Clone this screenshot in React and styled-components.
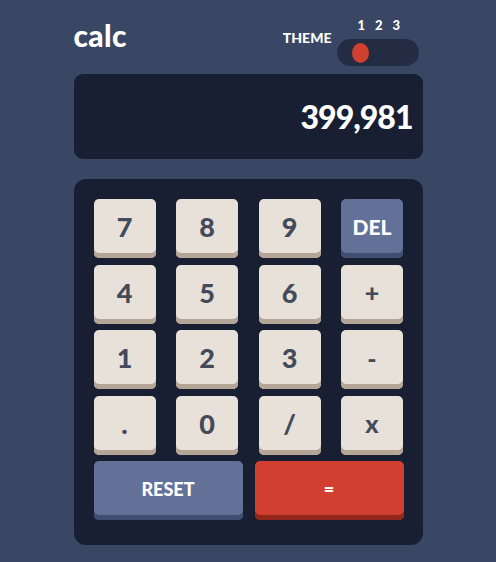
import React from 'react';
import styled, { createGlobalStyle } from 'styled-components';

const GlobalStyle = createGlobalStyle`
  body {
    margin: 0;
    background-color: #3a4764;
    font-family: 'Lato', 'Open Sans', sans-serif;
  }
`;

const Page = styled.div`
  width: 349px;
  margin: 0 auto;
  padding-top: 19px;
`;

const Header = styled.div`
  display: flex;
  justify-content: space-between;
  align-items: flex-end;
  height: 47px;
`;

const Logo = styled.div`
  color: #ffffff;
  font-size: 30px;
  font-weight: 900;
  letter-spacing: 0.3px;
  line-height: 1;
  margin-bottom: 16px;
`;

const ThemeBox = styled.div`
  display: flex;
  align-items: flex-start;
  gap: 5px;
  margin-right: 4px;
`;

const ThemeLabel = styled.div`
  color: #ffffff;
  font-size: 14px;
  font-weight: 900;
  margin-top: 10px;
`;

const SwitchColumn = styled.div`
  display: flex;
  flex-direction: column;
  gap: 7px;
`;

const Numbers = styled.div`
  display: flex;
  gap: 10px;
  padding-left: 21px;
  color: #ffffff;
  font-size: 13px;
  font-weight: 900;
  line-height: 13px;
`;

const Track = styled.div`
  width: 82px;
  height: 27px;
  border-radius: 14px;
  background-color: #232c43;
  display: flex;
  align-items: center;
  padding-left: 15px;
  box-sizing: border-box;
`;

const Knob = styled.div`
  width: 17px;
  height: 20px;
  border-radius: 50%;
  background-color: #d03f2f;
`;

const Screen = styled.div`
  margin-top: 8px;
  height: 85px;
  border-radius: 9px;
  background-color: #181f33;
  display: flex;
  align-items: center;
  justify-content: flex-end;
  padding-right: 10px;
  color: #ffffff;
  font-size: 32px;
  font-weight: 900;
  letter-spacing: -1px;
`;

const Keypad = styled.div`
  margin-top: 20px;
  border-radius: 12px;
  background-color: #181f33;
  padding: 20px 19px 25px 20px;
  display: grid;
  grid-template-columns: repeat(4, 62px);
  column-gap: 20.5px;
  row-gap: 6.5px;
`;

const palette = {
  light: { face: '#e8e1da', shade: '#b4a597', text: '#434a59' },
  blue: { face: '#637097', shade: '#404e72', text: '#ffffff' },
  red: { face: '#d03f2f', shade: '#93261a', text: '#ffffff' },
};

const sizes = { digit: '27px', sign: '25px', word: '21px', eq: '18px' };

const Key = styled.button`
  height: 59px;
  border: none;
  border-radius: 5px;
  padding: 0 0 4px 0;
  background-color: ${(props) => palette[props.kind || 'light'].face};
  box-shadow: inset 0 -5px 0 ${(props) => palette[props.kind || 'light'].shade};
  color: ${(props) => palette[props.kind || 'light'].text};
  font-family: 'Lato', 'Open Sans', sans-serif;
  font-size: ${(props) => sizes[props.size || 'digit']};
  font-weight: 900;
  cursor: pointer;
`;

const BottomRow = styled.div`
  grid-column: 1 / -1;
  display: grid;
  grid-template-columns: 149px 149px;
  column-gap: 12px;
`;

const keys = ['7', '8', '9', 'DEL', '4', '5', '6', '+', '1', '2', '3', '-', '.', '0', '/', 'x'];
const signs = ['+', '-', 'x'];

export default function App() {
  return (
    <>
      <GlobalStyle />
      <Page>
        <Header>
          <Logo>calc</Logo>
          <ThemeBox>
            <ThemeLabel>THEME</ThemeLabel>
            <SwitchColumn>
              <Numbers>
                <span>1</span>
                <span>2</span>
                <span>3</span>
              </Numbers>
              <Track>
                <Knob />
              </Track>
            </SwitchColumn>
          </ThemeBox>
        </Header>
        <Screen>399,981</Screen>
        <Keypad>
          {keys.map((k) => (
            <Key
              key={k}
              kind={k === 'DEL' ? 'blue' : 'light'}
              size={k === 'DEL' ? 'word' : signs.includes(k) ? 'sign' : 'digit'}
            >
              {k}
            </Key>
          ))}
          <BottomRow>
            <Key kind="blue" size="eq">RESET</Key>
            <Key kind="red" size="eq">=</Key>
          </BottomRow>
        </Keypad>
      </Page>
    </>
  );
}
